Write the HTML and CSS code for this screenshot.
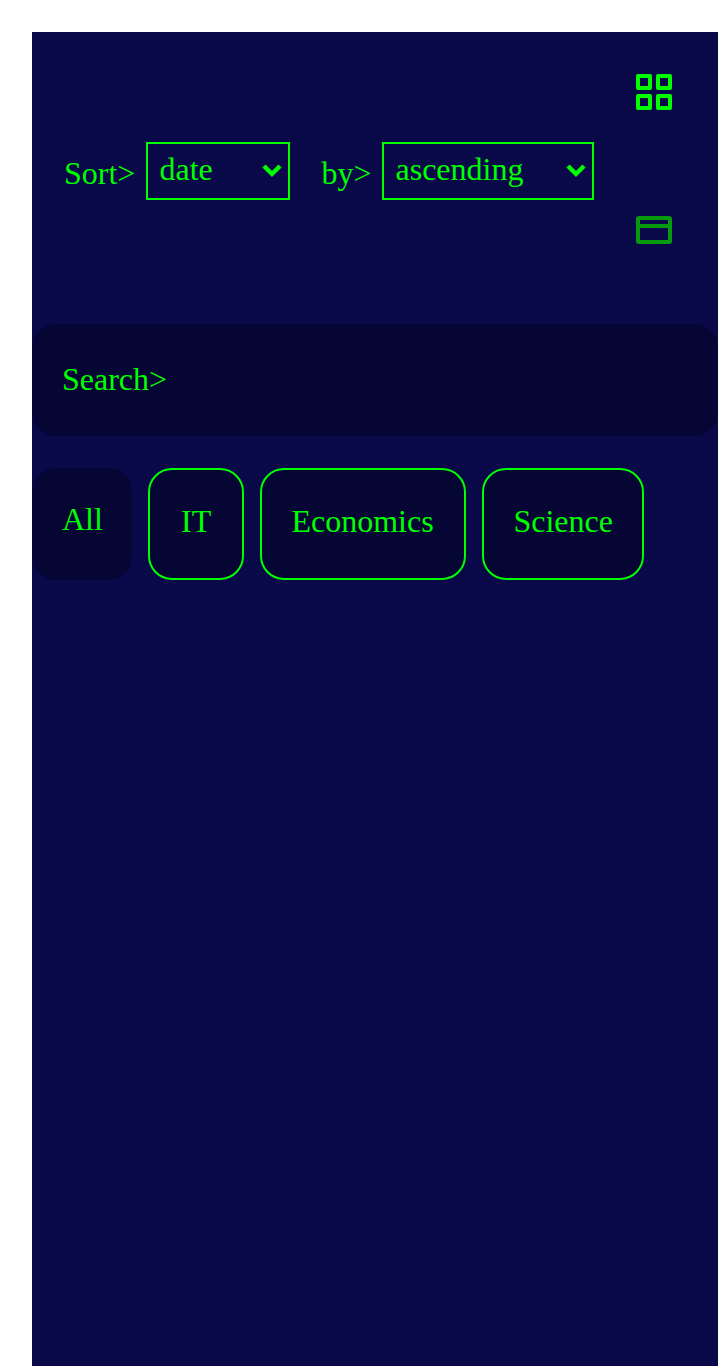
FILE: index.html
```html
<!DOCTYPE html>
<html lang="en">
<head>
<meta charset="utf-8">
<title>Articles</title>
<link rel="stylesheet" href="styles.css">
</head>
<body>
<main class="page">
  <header class="toolbar">
    <div class="sorting">
      <span class="label">Sort&gt;</span>
      <div class="select select-field"><span>date</span><svg class="arrow" viewBox="0 0 20 14"><path d="M2 2L10 10L18 2"/></svg></div>
      <span class="label label-by">by&gt;</span>
      <div class="select select-order"><span>ascending</span><svg class="arrow" viewBox="0 0 20 14"><path d="M2 2L10 10L18 2"/></svg></div>
    </div>
    <div class="views">
      <svg class="view-grid" viewBox="0 0 36 36"><rect x="2" y="2" width="12" height="12"/><rect x="22" y="2" width="12" height="12"/><rect x="2" y="22" width="12" height="12"/><rect x="22" y="22" width="12" height="12"/></svg>
      <svg class="view-card" viewBox="0 0 36 28"><rect x="2" y="2" width="32" height="24" rx="1"/><path d="M2 10H34"/></svg>
    </div>
  </header>
  <div class="search">Search&gt;</div>
  <nav class="tags">
    <span class="tag tag-all">All</span>
    <span class="tag tag-it">IT</span>
    <span class="tag tag-economics">Economics</span>
    <span class="tag tag-science">Science</span>
  </nav>
</main>
</body>
</html>
```

FILE: styles.css
```css
* { box-sizing: border-box; }
body {
  margin: 0;
  padding: 32px 0 0 32px;
  height: 1366px;
  overflow: hidden;
  background: #fff;
  font: 32px/36px "Liberation Serif", serif;
  color: #0f0;
}
.page { height: 1334px; background: #090849; }
.toolbar { display: flex; justify-content: space-between; height: 292px; padding: 42px 46px 0 32px; }
.sorting { display: flex; align-items: flex-start; padding-top: 68px; }
.label { width: 82px; padding-top: 13px; }
.label-by { width: 60.5px; margin-left: 31.5px; }
.select {
  display: flex;
  justify-content: space-between;
  height: 58px;
  padding: 7px 6px 0 11.5px;
  border: 2px solid #0f0;
}
.select-field { width: 144px; }
.select-order { width: 212px; }
.arrow { width: 20px; height: 14px; margin-top: 13px; fill: none; stroke: #0f0; stroke-width: 4.4; }
.views { display: flex; flex-direction: column; gap: 106px; }
.views svg { display: block; width: 36px; fill: none; stroke: #0f0; stroke-width: 4; stroke-linejoin: round; }
.view-grid { height: 36px; }
.views .view-card { height: 28px; stroke: #069a0e; }
.search { height: 112px; padding: 37px 30px; border-radius: 24px; background: #050633; }
.tags { display: flex; gap: 16px; margin-top: 32px; }
.tag {
  height: 112px;
  padding: 33px 0 0 29.4px;
  border: 2px solid #0f0;
  border-radius: 24px;
  background: #050633;
}
.tag-all { width: 100px; padding: 33px 0 0 30px; border: 0; }
.tag-it { width: 96px; padding-left: 31px; }
.tag-economics { width: 206px; }
.tag-science { width: 162px; }
```
